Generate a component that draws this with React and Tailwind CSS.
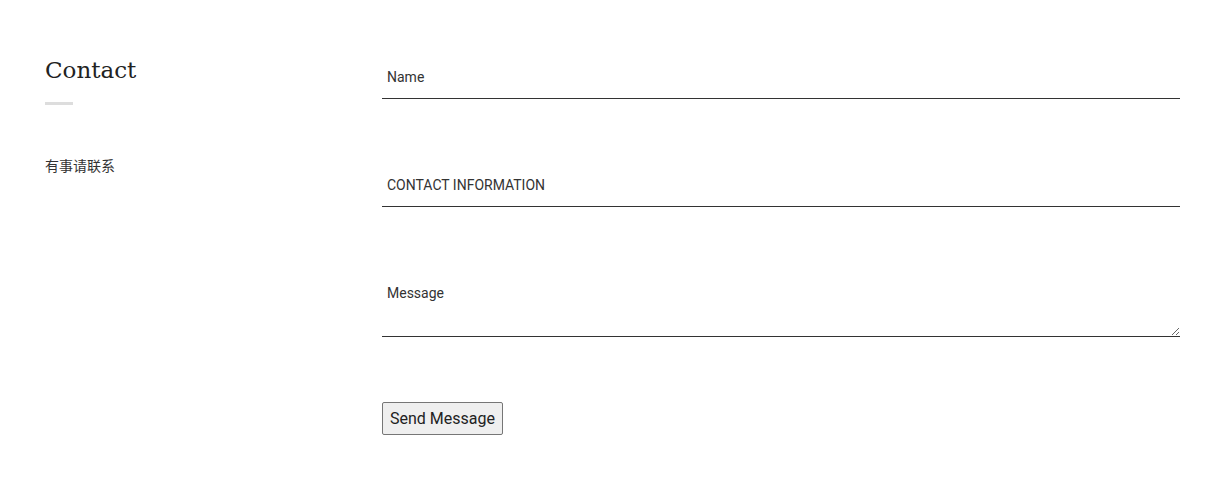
import { useState } from 'react'

export default function App() {
  const [form, setForm] = useState({ name: '', info: '', message: '' })

  const set = key => e => setForm({ ...form, [key]: e.target.value })

  return (
    <div className="flex min-h-[499px] bg-white pl-[45px] pr-[47px] pt-[52px] text-[#333]" style={{ fontFamily: 'Roboto, "Noto Sans CJK SC", sans-serif' }}>
      {/* left column */}
      <div className="w-[337px] shrink-0">
        <h2 className="text-[23px] leading-[36px] tracking-[0px] text-[#222]" style={{ fontFamily: '"DejaVu Serif", serif', fontWeight: 300 }}>
          Contact
        </h2>
        <div className="mt-[14px] h-[3px] w-[28px] bg-[#ddd]" />
        <p className="mt-[51px] text-[14px] leading-[20px] text-[#333]">有事请联系</p>
      </div>

      {/* form */}
      <form className="flex flex-1 flex-col pt-[3px]" onSubmit={e => e.preventDefault()}>
        <input
          type="text"
          value={form.name}
          onChange={set('name')}
          placeholder="Name"
          className="h-[44px] border-b border-[#333] px-[5px] text-[14px] outline-none placeholder:text-[#333]"
        />
        <input
          type="text"
          value={form.info}
          onChange={set('info')}
          placeholder="CONTACT INFORMATION"
          className="mt-[64px] h-[44px] border-b border-[#333] px-[5px] text-[14px] outline-none placeholder:text-[#333]"
        />
        <textarea
          value={form.message}
          onChange={set('message')}
          placeholder="Message"
          className="mt-[64px] h-[66px] border-b border-[#333] px-[5px] pt-[14px] text-[14px] leading-[16px] outline-none placeholder:text-[#333]"
        />
        <div className="mt-[65px]">
          <button
            type="submit"
            className="h-[33px] rounded-[2px] border border-[#767676] bg-[#efefef] px-[7px] text-[16px] text-[#222]"
          >
            Send Message
          </button>
        </div>
      </form>
    </div>
  )
}
